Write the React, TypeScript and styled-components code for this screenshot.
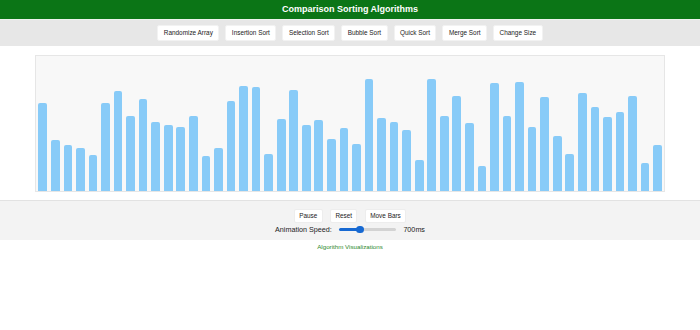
import * as React from 'react';
import styled, { createGlobalStyle } from 'styled-components';

const GlobalStyle = createGlobalStyle`
  body {
    margin: 0;
    background: #fff;
    font-family: "Liberation Sans", Arial, sans-serif;
    color: #222;
  }
`;

const SORTS = [
  'Randomize Array',
  'Insertion Sort',
  'Selection Sort',
  'Bubble Sort',
  'Quick Sort',
  'Merge Sort',
  'Change Size',
];

// bar heights in px, as they stand in the chart
const BARS = [
  88, 51, 46, 43, 36, 88, 100, 75, 92, 69, 66, 64, 75, 35, 43, 90, 105, 104,
  37, 72, 101, 66, 71, 52, 63, 47, 112, 73, 69, 61, 31, 112, 75, 95, 68, 25,
  108, 75, 109, 64, 94, 55, 37, 98, 84, 74, 79, 95, 28, 46,
];

const SPEED = 700;
const SPEED_MAX = 2000;

/**
 * Sorting visualizer page.
 */
export default function App() {
  return (
    <>
      <GlobalStyle />
      <Header>Comparison Sorting Algorithms</Header>
      <Toolbar>
        {SORTS.map(s => (
          <ToolButton key={s}>{s}</ToolButton>
        ))}
      </Toolbar>
      <Chart>
        {BARS.map((h, i) => (
          <Bar key={i} style={{ height: `${h}px` }} />
        ))}
      </Chart>
      <Controls>
        <ControlRow>
          <SmallButton>Pause</SmallButton>
          <SmallButton>Reset</SmallButton>
          <SmallButton>Move Bars</SmallButton>
        </ControlRow>
        <SpeedRow>
          <span>Animation Speed:</span>
          <Slider
            type="range"
            min={0}
            max={SPEED_MAX}
            defaultValue={SPEED}
            fill={(SPEED / SPEED_MAX) * 100}
          />
          <span>{SPEED}ms</span>
        </SpeedRow>
      </Controls>
      <Footer>Algorithm Visualizations</Footer>
    </>
  );
}

const Header = styled.header`
  height: 19px;
  line-height: 19px;
  background: #0b7516;
  color: #fff;
  font-size: 9px;
  font-weight: bold;
  text-align: center;
  border-bottom: 1px solid #eef3ee;
`;

const Toolbar = styled.nav`
  display: flex;
  justify-content: center;
  gap: 6px;
  padding: 4.5px 0 5px;
  background: #e7e7e7;
`;

const ToolButton = styled.button`
  height: 16px;
  padding: 0 5.5px;
  font-family: inherit;
  font-size: 6.4px;
  color: #222;
  background: #fff;
  border: 1px solid #f2f2f2;
  border-radius: 2px;
`;

const Chart = styled.div`
  display: flex;
  align-items: flex-end;
  box-sizing: border-box;
  width: 630px;
  height: 137px;
  margin: 9px auto 0;
  padding: 0 0.5px;
  background: #f8f8f8;
  border: 1px solid #e6e6e6;
`;

const Bar = styled.div`
  flex: 1;
  margin: 0 1.95px;
  background: #88cbf8;
  border-radius: 2px 2px 0 0;
`;

const Controls = styled.section`
  margin-top: 8.5px;
  padding: 7.5px 0 4px;
  background: #f3f3f3;
  border-top: 1px solid #e2e2e2;
  display: flex;
  flex-direction: column;
  align-items: center;
  gap: 0.5px;
`;

const ControlRow = styled.div`
  display: flex;
  gap: 7.5px;
`;

const SmallButton = styled.button`
  height: 14.5px;
  padding: 0 4.3px;
  font-family: inherit;
  font-size: 6.4px;
  color: #222;
  background: #fff;
  border: 1px solid #ededed;
  border-radius: 2px;
`;

const SpeedRow = styled.div`
  display: flex;
  align-items: center;
  gap: 7.3px;
  height: 12px;
  font-size: 7.2px;
  color: #222;
`;

const Slider = styled.input<{ fill: number }>`
  -webkit-appearance: none;
  appearance: none;
  width: 57px;
  height: 3px;
  margin: 0;
  border-radius: 2px;
  background: ${p =>
    `linear-gradient(to right, #1769d2 ${p.fill}%, #d3d3d3 ${p.fill}%)`};

  &::-webkit-slider-thumb {
    -webkit-appearance: none;
    width: 7.5px;
    height: 7.5px;
    border-radius: 50%;
    background: #1769d2;
    border: none;
  }
`;

const Footer = styled.footer`
  margin-top: 3.5px;
  text-align: center;
  font-size: 6.2px;
  color: #2d8a2d;
`;
